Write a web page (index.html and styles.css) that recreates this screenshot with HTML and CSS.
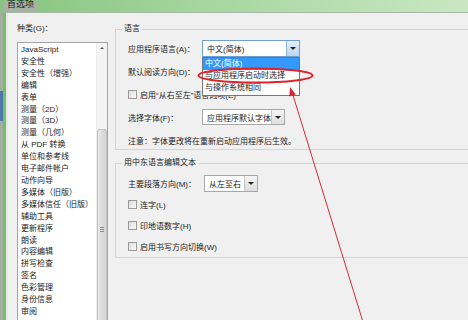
FILE: index.html
```html
<!DOCTYPE html>
<html lang="zh-CN">
<head>
  <meta charset="UTF-8">
  <meta name="viewport" content="width=device-width, initial-scale=1.0">
  <title>首选项</title>
  <link rel="stylesheet" href="styles.css">
</head>
<body>
  <!-- Title bar -->
  <div class="titlebar">
    <span class="title">首选项</span>
  </div>

  <div class="window">
    <div class="frame"><div class="frame-mark"></div></div>

    <div class="dialog">
      <!-- Categories -->
      <div class="sidebar">
        <div class="caption">种类(G)：</div>
        <div class="listbox">
          <ul class="items">
            <li>JavaScript</li>
            <li>安全性</li>
            <li>安全性（增强）</li>
            <li>编辑</li>
            <li>表单</li>
            <li>测量（2D）</li>
            <li>测量（3D）</li>
            <li>测量（几何）</li>
            <li>从 PDF 转换</li>
            <li>单位和参考线</li>
            <li>电子邮件帐户</li>
            <li>动作向导</li>
            <li>多媒体（旧版）</li>
            <li>多媒体信任（旧版）</li>
            <li>辅助工具</li>
            <li>更新程序</li>
            <li>朗读</li>
            <li>内容编辑</li>
            <li>拼写检查</li>
            <li>签名</li>
            <li>色彩管理</li>
            <li>身份信息</li>
            <li>审阅</li>
          </ul>
          <div class="scrollbar">
            <div class="up"></div>
            <div class="thumb"><span class="grip"></span></div>
          </div>
        </div>
      </div>

      <!-- Settings -->
      <div class="panel">
        <fieldset class="group lang">
          <legend>语言</legend>
          <div class="rows">
            <div class="row">
              <span class="lbl">应用程序语言(A)：</span>
              <div class="combo open">
                <span class="value">中文(简体)</span>
                <span class="btn"><i class="caret"></i></span>
                <ul class="dropdown">
                  <li class="selected">中文(简体)</li>
                  <li>与应用程序启动时选择</li>
                  <li>与操作系统相同</li>
                </ul>
              </div>
            </div>
            <div class="row">
              <span class="lbl">默认阅读方向(D)：</span>
            </div>
            <div class="row">
              <span class="check"></span>
              <span>启用“从右至左”语言选项(E)</span>
            </div>
            <div class="row">
              <span class="lbl">选择字体(F)：</span>
              <div class="combo font">
                <span class="value">应用程序默认字体</span>
                <span class="btn"><i class="caret"></i></span>
              </div>
            </div>
            <div class="row">
              <span>注意：字体更改将在重新启动应用程序后生效。</span>
            </div>
          </div>
        </fieldset>

        <fieldset class="group mideast">
          <legend>用中东语言编辑文本</legend>
          <div class="rows">
            <div class="row">
              <span class="lbl long">主要段落方向(M)：</span>
              <div class="combo dir">
                <span class="value">从左至右</span>
                <span class="btn"><i class="caret"></i></span>
              </div>
            </div>
            <div class="row">
              <span class="check"></span>
              <span>连字(L)</span>
            </div>
            <div class="row">
              <span class="check"></span>
              <span>印地语数字(H)</span>
            </div>
            <div class="row">
              <span class="check"></span>
              <span>启用书写方向切换(W)</span>
            </div>
          </div>
        </fieldset>
      </div>
    </div>
  </div>

  <!-- Annotation -->
  <svg class="markup" width="468" height="320" viewBox="0 0 468 320">
    <ellipse cx="255.5" cy="75.5" rx="57" ry="7" fill="none" stroke="#e0232b" stroke-width="2"/>
    <line x1="363" y1="322" x2="292" y2="92" stroke="#d42a3a" stroke-width="1"/>
    <polygon points="290,87 295.9,94.6 289.3,96.6" fill="#d42a3a"/>
  </svg>
</body>
</html>
```

FILE: styles.css
```css
body {
  margin: 0;
  width: 468px;
  height: 320px;
  overflow: hidden;
  position: relative;
  font-family: "Liberation Sans", "Noto Sans CJK SC", sans-serif;
  font-size: 8px;
  color: #222;
  background-color: #f0f0f0;
}

/* Title bar */
.titlebar {
  height: 12px;
  background: linear-gradient(to right, #86c47f, #a6d79f 45%, #c9e7c3);
  border-bottom: 1px solid #a7b7a5;
  overflow: hidden;
}

.titlebar .title {
  display: inline-block;
  margin-left: 4px;
  padding: 0 3px;
  height: 9px;
  line-height: 5px;
  font-size: 9px;
  background-color: #a7b2a4;
  color: #1a1a1a;
}

/* Window */
.window {
  display: flex;
  height: 307px;
}

.frame {
  width: 8px;
  background: linear-gradient(to right, #a3ada0 0 3px, #74bf6e 3px 6px, #e4ebe3 6px 8px);
}

.frame-mark {
  width: 3px;
  height: 30px;
  margin-top: 78px;
  background-color: #4d78ad;
}

.dialog {
  flex: 1;
  display: flex;
}

/* Sidebar */
.sidebar {
  width: 102px;
  box-sizing: border-box;
  padding-left: 9px;
}

.caption {
  margin-top: 9px;
  height: 14px;
  line-height: 14px;
}

.listbox {
  display: flex;
  width: 91px;
  height: 290px;
  margin-top: 6px;
  box-sizing: border-box;
  border: 1px solid #a5a5a5;
  background-color: #fff;
}

.items {
  flex: 1;
  list-style: none;
  margin: 0;
  padding: 1px 0 0 3px;
  line-height: 11.9px;
  white-space: nowrap;
  overflow: hidden;
}

.scrollbar {
  width: 10px;
  display: flex;
  flex-direction: column;
  background-color: #f4f4f4;
  border-left: 1px solid #ececec;
}

.scrollbar .up {
  height: 12px;
  display: flex;
  justify-content: center;
  align-items: center;
}

.scrollbar .up::before {
  content: "";
  border-left: 2px solid transparent;
  border-right: 2px solid transparent;
  border-bottom: 2px solid #555;
}

.scrollbar .thumb {
  margin-top: 76px;
  height: 250px;
  box-sizing: border-box;
  border: 1px solid #c4c4c4;
  border-radius: 2px;
  background: linear-gradient(to right, #e6e6e6, #d4d4d4);
  display: flex;
  justify-content: center;
  align-items: center;
}

.scrollbar .grip {
  width: 4px;
  height: 5px;
  background: repeating-linear-gradient(to bottom, #8d8d8d 0 1px, transparent 1px 2px);
}

/* Panel */
.panel {
  flex: 1;
  padding-left: 5px;
}

.group {
  margin: 0;
  padding: 3px 0 0 12px;
  border: 1px solid #d5d5d5;
  border-right: none;
  min-width: 0;
}

.group.lang {
  margin-top: 9px;
}

.group.mideast {
  margin-top: 6px;
  padding-top: 4px;
  padding-bottom: 2px;
}

.group legend {
  margin-left: -6px;
  padding: 0 2px;
  height: 14px;
  line-height: 14px;
}

.rows {
  display: flex;
  flex-direction: column;
  gap: 5px;
}

.mideast .rows {
  gap: 3px;
}

.row {
  height: 18px;
  display: flex;
  align-items: center;
  white-space: nowrap;
}

.lbl {
  width: 74px;
}

.lbl.long {
  width: 76px;
}

.check {
  width: 9px;
  height: 9px;
  box-sizing: border-box;
  margin-right: 3px;
  border: 1px solid #9a9a9a;
  background: linear-gradient(135deg, #dcdcdc, #fafafa);
}

/* Combo boxes */
.combo {
  position: relative;
  height: 17px;
  box-sizing: border-box;
  display: flex;
  align-items: center;
  border: 1px solid #a8a8a8;
  background-color: #fff;
}

.combo .value {
  flex: 1;
  padding-left: 4px;
}

.combo .btn {
  width: 12px;
  align-self: stretch;
  display: flex;
  justify-content: center;
  align-items: center;
  background: linear-gradient(#f4f4f4, #dedede);
  border-left: 1px solid #c6c6c6;
}

.caret {
  border-left: 3px solid transparent;
  border-right: 3px solid transparent;
  border-top: 3px solid #222;
}

.combo.open {
  width: 98px;
  border-color: #6f9fcf;
}

.combo.open .btn {
  background: linear-gradient(#e3effa, #bcd6ef);
  border-left-color: #8fb3d6;
}

.combo.font {
  width: 83px;
  height: 16px;
}

.combo.dir {
  width: 54px;
}

.dropdown {
  position: absolute;
  top: 16px;
  left: -1px;
  width: 98px;
  margin: 0;
  padding: 0 0 1px;
  list-style: none;
  box-sizing: border-box;
  border: 1px solid #767676;
  background-color: #fff;
  z-index: 2;
}

.dropdown li {
  height: 12px;
  line-height: 12px;
  padding-left: 2px;
}

.dropdown li.selected {
  background-color: #3399ff;
  color: #fff;
}

/* Annotation */
.markup {
  position: absolute;
  top: 0;
  left: 0;
  pointer-events: none;
  z-index: 3;
}
```
